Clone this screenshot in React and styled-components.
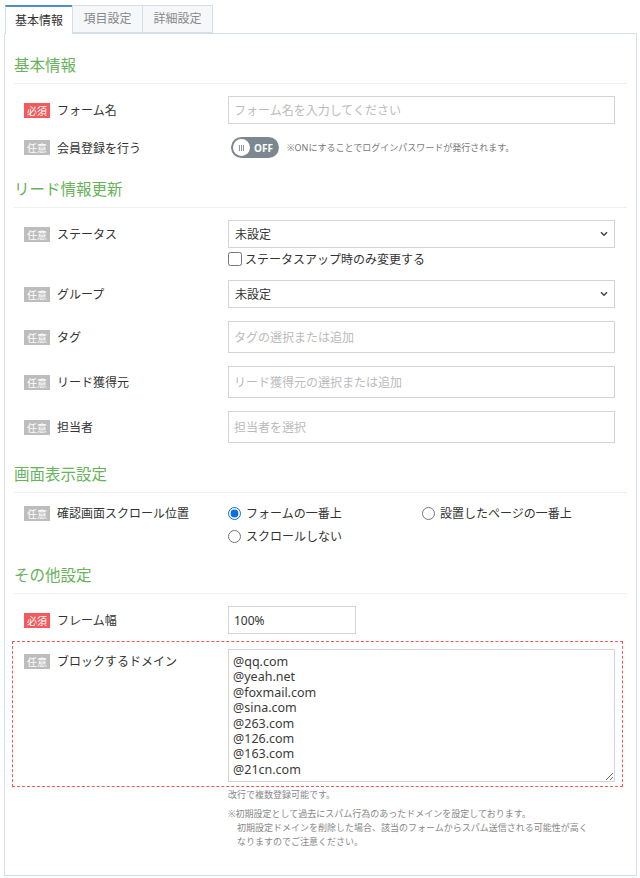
import styled, { createGlobalStyle } from 'styled-components';

const GlobalStyle = createGlobalStyle`
  body {
    margin: 0;
    background: #fff;
    font-family: "Noto Sans", "Noto Sans CJK JP", sans-serif;
    color: #333;
  }
  * { box-sizing: border-box; }
`;

const Page = styled.div`
  width: 640px;
  height: 878px;
  padding: 0 3px 0 4px;
`;

const TabBar = styled.div`
  display: flex;
  margin: 5px 0 0 1px;
  height: 28px;
  position: relative;
  z-index: 1;
`;

const Tab = styled.div`
  width: ${({ $w }) => $w}px;
  height: ${({ $active }) => ($active ? '29px' : '28px')};
  display: flex;
  align-items: center;
  justify-content: center;
  font-size: 12px;
  line-height: 1;
  border: 1px solid #d3dfe9;
  border-top: ${({ $active }) => ($active ? '2px solid #4a90d0' : '1px solid #d3dfe9')};
  border-bottom: ${({ $active }) => ($active ? 'none' : '1px solid #d3dfe9')};
  margin-left: -1px;
  background: ${({ $active }) => ($active ? '#fff' : '#f6f7f9')};
  color: ${({ $active }) => ($active ? '#333' : '#888')};
  &:first-child { margin-left: 0; }
`;

const Panel = styled.div`
  border: 1px solid #d6e0ea;
  height: 843px;
  padding: 0 9px 25px;
`;

const Section = styled.section``;

const Heading = styled.h2`
  margin: 0;
  padding: 21px 0 8px;
  font-size: 15.5px;
  line-height: 20px;
  font-weight: 400;
  color: #67b25a;
  border-bottom: 1px solid #f0f0f0;
`;

const Body = styled.div`
  padding-top: 12px;
`;

const Row = styled.div`
  display: grid;
  grid-template-columns: 204px 1fr;
  align-items: start;
  padding: 0 12px 0 10px;
  & + & { margin-top: 13px; }
`;

const HighlightRow = styled(Row)`
  border: 1px dashed #f05a5a;
  padding: 7px 7px 4px 11px;
  && {
    margin: 7px 4px 0 -2px;
  }
`;

const Label = styled.div`
  height: ${({ $h }) => $h || 28}px;
  display: flex;
  align-items: center;
  font-size: 12px;
  color: #333;
  white-space: nowrap;
`;

const Badge = styled.span`
  display: inline-flex;
  align-items: center;
  justify-content: center;
  width: 26px;
  height: 15px;
  margin-right: 7px;
  font-size: 10px;
  color: #fff;
  background: ${({ $required }) => ($required ? '#f25a5c' : '#bdbdbd')};
`;

const Field = styled.div`
  min-width: 0;
`;

const TextInput = styled.input`
  display: block;
  width: ${({ $w }) => ($w ? `${$w}px` : '100%')};
  height: ${({ $h }) => $h || 28}px;
  border: 1px solid #d4d4d4;
  padding: 0 5px;
  font-family: inherit;
  font-size: 12px;
  color: #333;
  outline: none;
  &::placeholder { color: #bbbbbb; }
`;

const SelectWrap = styled.div`
  position: relative;
`;

const Select = styled.select`
  display: block;
  width: 100%;
  height: 28px;
  border: 1px solid #d4d4d4;
  padding: 0 6px;
  font-family: inherit;
  font-size: 12px;
  color: #333;
  background: #fff;
  appearance: none;
  outline: none;
`;

const Chevron = styled.svg`
  position: absolute;
  right: 7px;
  top: 11px;
  pointer-events: none;
`;

const CheckLine = styled.label`
  display: flex;
  align-items: center;
  margin-top: 3px;
  height: 16px;
  font-size: 12px;
  color: #333;
`;

const Checkbox = styled.input`
  width: 14px;
  height: 14px;
  margin: 0 3px 0 0;
`;

const ToggleLine = styled.div`
  display: flex;
  align-items: center;
  height: 21px;
  padding-left: 3px;
`;

const Toggle = styled.div`
  position: relative;
  width: 48px;
  height: 21px;
  border-radius: 11px;
  background: #7d878f;
  display: flex;
  align-items: center;
  justify-content: flex-end;
  padding-right: 6px;
  color: #fff;
  font-size: 10px;
  font-weight: 700;
`;

const Knob = styled.span`
  position: absolute;
  left: 2px;
  top: 2px;
  width: 17px;
  height: 17px;
  border-radius: 50%;
  background: #fff;
  display: flex;
  align-items: center;
  justify-content: center;
  gap: 1px;
  & > i {
    display: block;
    width: 1px;
    height: 6px;
    background: #8a939a;
  }
`;

const Note = styled.span`
  margin-left: 8px;
  font-size: 9px;
  color: #777;
  white-space: nowrap;
`;

const RadioGrid = styled.div`
  display: grid;
  grid-template-columns: 194px 1fr;
  row-gap: 7px;
`;

const RadioOption = styled.label`
  display: flex;
  align-items: center;
  height: 16px;
  font-size: 12px;
  color: #333;
  white-space: nowrap;
`;

const Radio = styled.input`
  width: 13px;
  height: 13px;
  margin: 0 5px 0 0;
  accent-color: #0b6fe0;
`;

const TextArea = styled.textarea`
  display: block;
  width: 100%;
  height: 133px;
  border: 1px solid #d4d4d4;
  padding: 4px 4px;
  font-family: "Noto Sans", sans-serif;
  font-size: 12.5px;
  line-height: 15.4px;
  color: #3a3a3a;
  outline: none;
  resize: vertical;
`;

const Help = styled.div`
  margin-left: 214px;
  margin-top: 1px;
  font-size: 9px;
  line-height: 14px;
  color: #888;
`;

const HelpNote = styled.p`
  margin: 5px 0 0;
  padding-left: 9px;
  text-indent: -9px;
`;

const domains = [
  '@qq.com',
  '@yeah.net',
  '@foxmail.com',
  '@sina.com',
  '@263.com',
  '@126.com',
  '@163.com',
  '@21cn.com',
].join('\n');

const FieldLabel = ({ required, h, children }) => (
  <Label $h={h}>
    <Badge $required={required}>{required ? '必須' : '任意'}</Badge>
    {children}
  </Label>
);

const DropDown = () => (
  <SelectWrap>
    <Select defaultValue="">
      <option value="">未設定</option>
    </Select>
    <Chevron width="8" height="6" viewBox="0 0 8 6">
      <path d="M1 1.2 L4 4.2 L7 1.2" fill="none" stroke="#444" strokeWidth="1.5" />
    </Chevron>
  </SelectWrap>
);

const App = () => {
  return (
    <>
      <GlobalStyle />
      <Page>
        <TabBar>
          <Tab $active $w={68}>基本情報</Tab>
          <Tab $w={71}>項目設定</Tab>
          <Tab $w={71}>詳細設定</Tab>
        </TabBar>
        <Panel>
          <Section>
            <Heading>基本情報</Heading>
            <Body>
              <Row>
                <FieldLabel required>フォーム名</FieldLabel>
                <Field>
                  <TextInput placeholder="フォーム名を入力してください" />
                </Field>
              </Row>
              <Row>
                <FieldLabel h={21}>会員登録を行う</FieldLabel>
                <ToggleLine>
                  <Toggle>
                    <Knob><i /><i /><i /></Knob>
                    OFF
                  </Toggle>
                  <Note>※ONにすることでログインパスワードが発行されます。</Note>
                </ToggleLine>
              </Row>
            </Body>
          </Section>

          <Section>
            <Heading>リード情報更新</Heading>
            <Body>
              <Row>
                <FieldLabel>ステータス</FieldLabel>
                <Field>
                  <DropDown />
                  <CheckLine>
                    <Checkbox type="checkbox" />
                    ステータスアップ時のみ変更する
                  </CheckLine>
                </Field>
              </Row>
              <Row>
                <FieldLabel>グループ</FieldLabel>
                <Field>
                  <DropDown />
                </Field>
              </Row>
              <Row>
                <FieldLabel h={32}>タグ</FieldLabel>
                <Field>
                  <TextInput $h={32} placeholder="タグの選択または追加" />
                </Field>
              </Row>
              <Row>
                <FieldLabel h={32}>リード獲得元</FieldLabel>
                <Field>
                  <TextInput $h={32} placeholder="リード獲得元の選択または追加" />
                </Field>
              </Row>
              <Row>
                <FieldLabel h={32}>担当者</FieldLabel>
                <Field>
                  <TextInput $h={32} placeholder="担当者を選択" />
                </Field>
              </Row>
            </Body>
          </Section>

          <Section>
            <Heading>画面表示設定</Heading>
            <Body>
              <Row>
                <FieldLabel h={16}>確認画面スクロール位置</FieldLabel>
                <RadioGrid>
                  <RadioOption>
                    <Radio type="radio" name="scroll" defaultChecked />
                    フォームの一番上
                  </RadioOption>
                  <RadioOption>
                    <Radio type="radio" name="scroll" />
                    設置したページの一番上
                  </RadioOption>
                  <RadioOption>
                    <Radio type="radio" name="scroll" />
                    スクロールしない
                  </RadioOption>
                </RadioGrid>
              </Row>
            </Body>
          </Section>

          <Section>
            <Heading>その他設定</Heading>
            <Body>
              <Row>
                <FieldLabel required>フレーム幅</FieldLabel>
                <Field>
                  <TextInput $w={128} defaultValue="100%" />
                </Field>
              </Row>
              <HighlightRow>
                <FieldLabel h={24}>ブロックするドメイン</FieldLabel>
                <Field>
                  <TextArea defaultValue={domains} />
                </Field>
              </HighlightRow>
              <Help>
                <div>改行で複数登録可能です。</div>
                <HelpNote>
                  ※初期設定として過去にスパム行為のあったドメインを設定しております。
                  <br />
                  初期設定ドメインを削除した場合、該当のフォームからスパム送信される可能性が高く
                  <br />
                  なりますのでご注意ください。
                </HelpNote>
              </Help>
            </Body>
          </Section>
        </Panel>
      </Page>
    </>
  );
};

export default App;
